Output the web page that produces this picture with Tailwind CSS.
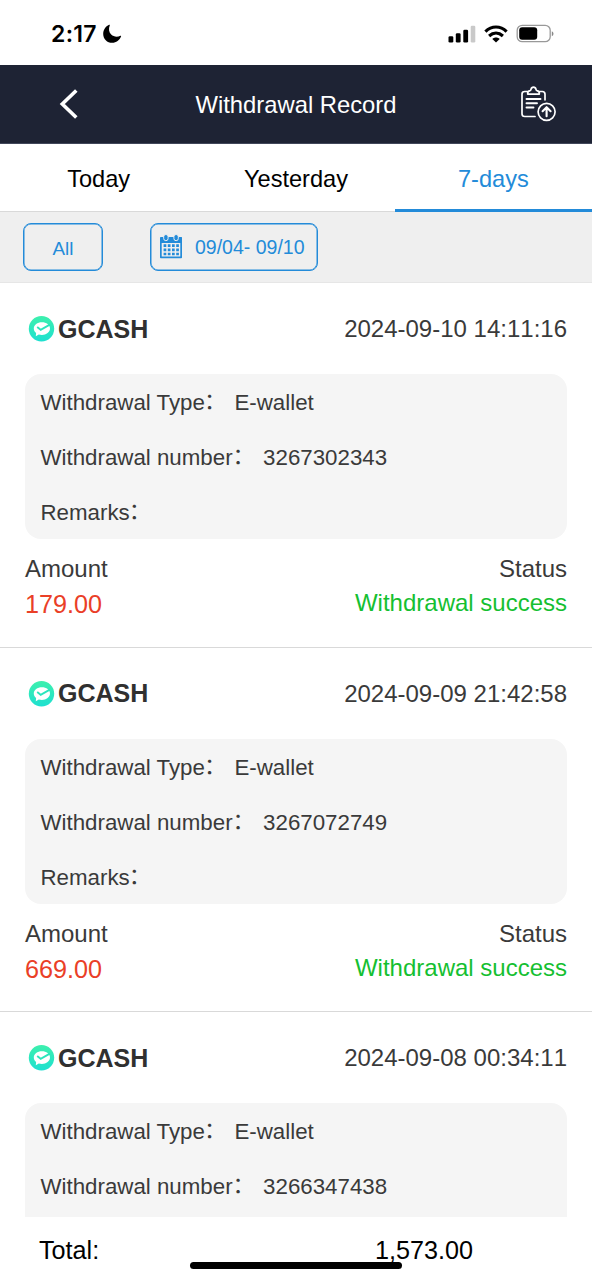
<!DOCTYPE html>
<html lang="en">
<head>
<meta charset="utf-8">
<title>Withdrawal Record</title>
<script src="https://cdn.jsdelivr.net/npm/@tailwindcss/browser@4"></script>
</head>
<body class="bg-white">
<div class="relative flex h-[1280px] w-[592px] flex-col overflow-hidden bg-white font-['Liberation_Sans','Noto_Sans_CJK_SC',sans-serif] text-[#3a3a3a]">
  <!-- Status bar -->
  <div class="flex h-[65px] shrink-0 items-center pt-[2px] pr-[38px] pl-[51px] text-black">
    <span class="w-[51px] font-['Inter',sans-serif] text-[23px] leading-7 font-semibold tracking-[0.300px]">2:17</span>
    <svg class="h-[20px] w-[20px]" viewBox="0 0 20 20"><path d="M7.8 1.2C6.3 5 7 8.300 9.200 10.500C11.700 13 15.500 13.200 18.400 11.700C19 11.500 19.300 11.800 19.100 12.300C17.600 16.200 14.200 18.800 10.200 18.800C5.100 18.800 1.200 14.900 1.200 9.900C1.200 6 3.500 2.400 7.100 .8C7.700 .6 8 .8 7.800 1.200Z"/></svg>
    <svg class="ml-auto h-[20px] w-[108px]" viewBox="0 0 108 20">
      <rect x="2.500" y="12.300" width="4.800" height="6.200" rx="1.300"/>
      <rect x="9.800" y="9.200" width="4.800" height="9.300" rx="1.300"/>
      <rect x="17.300" y="5.800" width="4.800" height="12.700" rx="1.300"/>
      <rect x="24.700" y="1.800" width="4.600" height="16.700" rx="1.300" fill="#c9c9c9"/>
      <g fill="none" stroke="#000" stroke-width="3.100"><path d="M39.400 7.700C45.600 1.500 54.400 1.500 60.600 7.700"/><path d="M43.100 12C47.300 8.100 52.700 8.100 56.900 12"/></g>
      <path d="M50 18.600L46.300 14.900C48.300 12.900 51.700 12.900 53.700 14.900Z"/>
      <rect x="71.200" y="1.300" width="33" height="16.400" rx="5" fill="none" stroke="#999" stroke-width="1.300"/>
      <rect x="73.200" y="3.200" width="18" height="12.600" rx="3"/>
      <path d="M105.800 7.200C108 8 108 11.500 105.800 12.200Z" fill="#888"/>
    </svg>
  </div>
  <!-- Title bar -->
  <div class="grid h-[79px] shrink-0 grid-cols-[140px_1fr_140px] items-center border-b border-[#41475a] bg-[#1e2334] text-white">
    <svg class="ml-[58px] h-[32px] w-[22px]" viewBox="0 0 22 32"><path d="M18.300 2.500L4.300 16L18.300 29.500" fill="none" stroke="#fff" stroke-width="3.600"/></svg>
    <h1 class="pt-[2px] text-center text-[23.8px] leading-7">Withdrawal Record</h1>
    <svg class="ml-[67px] h-[38px] w-[38px]" viewBox="0 0 38 38" fill="none" stroke="#fff" stroke-width="1.700" stroke-linecap="round" stroke-linejoin="round">
      <path d="M8.500 6.500H5.700Q3 6.500 3 9.200V28.800Q3 31.500 5.700 31.500H16M20.500 6.500H23.300Q26 6.500 26 9.200V14.800"/>
      <path d="M8.700 9.100Q8.300 6.100 11 5.600Q11.800 5.400 12 4.400Q12.500 2.200 14.500 2.200Q16.500 2.200 17 4.400Q17.200 5.400 18 5.600Q20.700 6.100 20.300 9.100Z"/>
      <path d="M7.500 14H21.500M7.500 18.200H18M7.500 22.500H14.500" stroke-width="1.900"/>
      <circle cx="27.600" cy="26.800" r="8.500"/><path d="M27.600 31.200V22.700M23.600 26.200L27.600 22.200L31.600 26.200" stroke-width="2.100"/>
    </svg>
  </div>
  <!-- Period tabs -->
  <div class="grid h-[68px] shrink-0 grid-cols-3 border-b border-[#d9d9d9] text-center text-[23.6px] leading-[70px] text-black">
    <div>Today</div>
    <div>Yesterday</div>
    <div class="z-10 h-[68px] border-b-[3px] border-[#238bd9] text-[#238bd9]">7-days</div>
  </div>
  <!-- Filters -->
  <div class="flex h-[71px] shrink-0 items-start gap-[47px] border-b border-[#e6e6e6] bg-[#efefef] pt-[11px] pl-[23px] text-[#238bd9]">
    <div class="h-[48px] w-[80px] rounded-[8px] border-[1.500px] border-[#238bd9] text-center text-[18.800px] leading-[49px] shadow-[inset_0_0_0_0.500px_#238bd9]">All</div>
    <div class="flex h-[48px] w-[168px] items-center rounded-[8px] border-[1.500px] border-[#238bd9] pl-[9px] shadow-[inset_0_0_0_0.500px_#238bd9]">
      <svg class="mr-[12px] h-[26px] w-[23px]" viewBox="0 0 23 26">
        <path fill="#238bd9" fill-rule="evenodd" d="M1 3H21.500Q22 3 22 3.500V23.500Q22 24.300 21.200 24.300H.8Q0 24.300 0 23.500V3.500Q0 3 1 3ZM1.700 9V22.600H20.300V9Z"/>
        <g fill="#238bd9" stroke="#efefef" stroke-width="1"><rect x="3.700" y=".5" width="4.400" height="6.200" rx="2.200"/><rect x="13.900" y=".5" width="4.400" height="6.200" rx="2.200"/></g>
        <path d="M3.600 11.600H18.900M3.600 15.800H18.900M3.600 20H18.900" stroke="#238bd9" stroke-width="2.700" stroke-dasharray="2.700 1.500"/>
      </svg>
      <span class="text-[19.500px] leading-6">09/04- 09/10</span>
    </div>
  </div>
  <!-- Records -->
  <main id="records" class="min-h-0 flex-1 overflow-hidden"></main>
  <!-- Footer -->
  <footer class="flex h-[63px] shrink-0 bg-white pt-[19px] pl-[39px] text-[25.200px] leading-7 text-black">
    <span class="w-[336px]">Total:</span><span>1,573.00</span>
  </footer>
  <div class="absolute top-[1262px] left-[190px] h-[7px] w-[212px] rounded-full bg-black"></div>
</div>

<template id="record">
  <section class="h-[364.67px] border-b border-[#d9d9d9] pr-[25px] pl-[25px]">
    <div class="flex h-[91px] items-center">
      <svg class="mr-[3px] ml-[3px] h-[27px] w-[27px]" viewBox="0 0 27 27">
        <defs><linearGradient id="mint" x1="0" y1="0" x2="0" y2="1"><stop offset="0" stop-color="#3df0ad"/><stop offset="1" stop-color="#1ee0d0"/></linearGradient></defs>
        <circle cx="13.500" cy="13.700" r="12.700" fill="url(#mint)"/>
        <path fill="#fff" d="M13.900 7.300C18.400 7.300 22 9.900 22 13.500C22 17.100 18.400 19.900 13.900 19.900C12.800 19.900 11.700 19.700 10.800 19.500L7.800 21.200L8.100 18C6.600 16.800 5.800 15.200 5.800 13.500C5.800 9.900 9.400 7.300 13.900 7.300Z"/>
        <path d="M9.200 12L12.700 14.800L21.800 9.600" fill="none" stroke="#2be5bc" stroke-width="1.800"/>
      </svg>
      <span class="text-[25px] leading-7 font-bold text-[#303030]">GCASH</span>
      <span data-f="time" class="ml-auto pt-px text-[24px] leading-7 [font-kerning:none]"></span>
    </div>
    <div class="flex h-[165px] flex-col rounded-[16px] bg-[#f5f5f5] pt-px pl-[15.500px] text-[22.300px] leading-[55px] whitespace-nowrap">
      <div class="flex h-[55px]"><span>Withdrawal Type</span><span class="-mt-[3px] -ml-px w-[30.500px] font-['Noto_Sans_CJK_SC',sans-serif]">：</span><span>E-wallet</span></div>
      <div class="flex h-[55px]"><span>Withdrawal number</span><span class="-mt-[3px] w-[30.500px] font-['Noto_Sans_CJK_SC',sans-serif]">：</span><span data-f="number"></span></div>
      <div data-tail class="flex h-[55px]"><span>Remarks</span><span class="-mt-[3px] -ml-px font-['Noto_Sans_CJK_SC',sans-serif]">：</span></div>
    </div>
    <div data-tail class="flex justify-between pt-[13px] text-[24px] leading-[34px]"><span>Amount</span><span>Status</span></div>
    <div data-tail class="flex justify-between pt-px text-[24px] leading-[34px] text-[#15bf31]"><span data-f="amount" class="text-[25.200px] text-[#ea3f27]"></span><span class="-mt-px">Withdrawal success</span></div>
  </section>
</template>
<script>
const records = [
  { time: "2024-09-10 14:11:16", number: "3267302343", amount: "179.00" },
  { time: "2024-09-09 21:42:58", number: "3267072749", amount: "669.00" },
  { time: "2024-09-08 00:34:11", number: "3266347438" }
];
const list = document.getElementById("records");
for (const record of records) {
  const row = document.getElementById("record").content.cloneNode(true);
  row.querySelectorAll("[data-f]").forEach(el => { el.textContent = record[el.dataset.f] ?? ""; });
  // A record without an amount shows only its leading rows.
  if (!record.amount) row.querySelectorAll("[data-tail]").forEach(el => el.remove());
  list.append(row);
}
</script>
</body>
</html>
